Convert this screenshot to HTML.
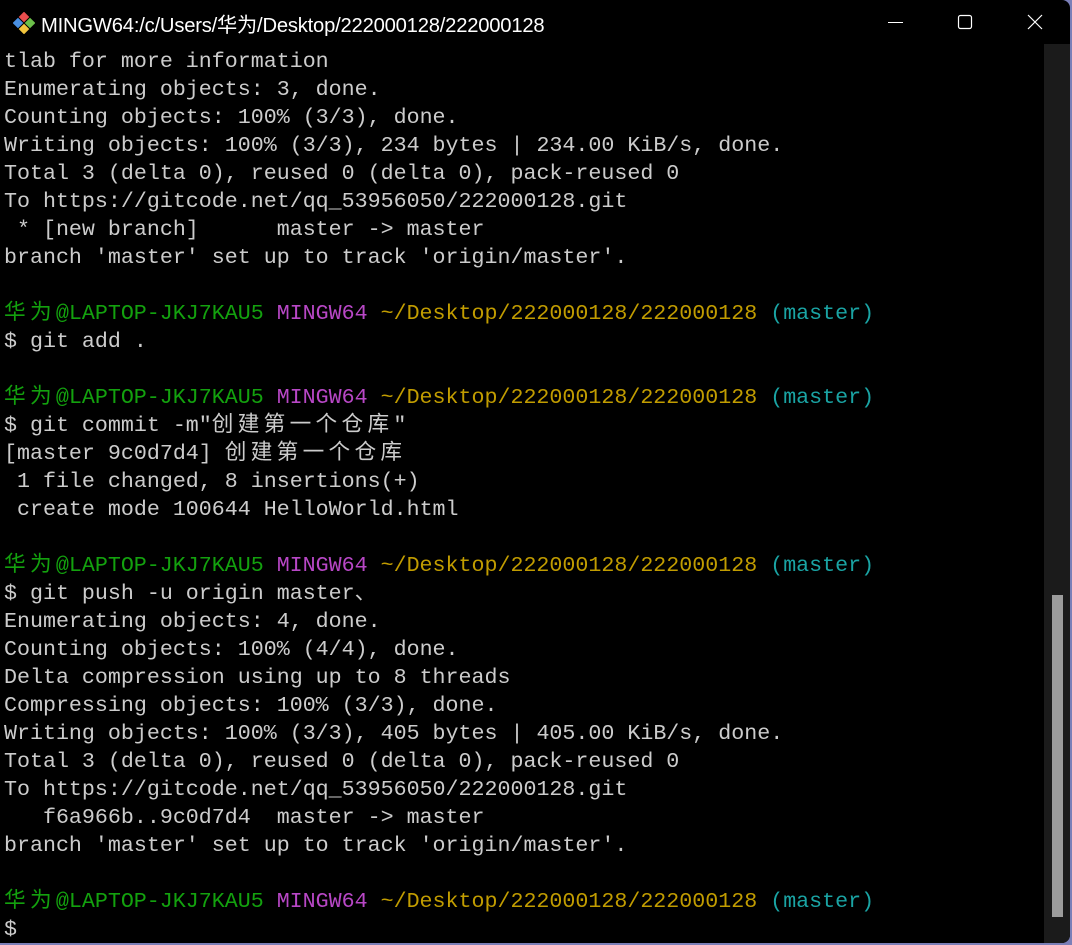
<!DOCTYPE html>
<html><head><meta charset="utf-8"><style>
html,body{margin:0;padding:0;width:1072px;height:945px;overflow:hidden;background:#7b7fb8;}
.win{position:absolute;left:0;top:0;width:1070px;height:943px;background:#000;border-radius:0 8px 8px 0;overflow:hidden;}
.title{position:absolute;left:0;top:0;width:100%;height:44px;color:#fff;font-family:"Liberation Sans","Noto Sans CJK SC",sans-serif;font-size:20.2px;}
.title .t{position:absolute;left:41px;top:9px;letter-spacing:-0.2px;}
.sb{position:absolute;left:1044px;top:44px;width:26px;height:899px;background:#1b1b1b;}
.thumb{position:absolute;left:8px;top:551px;width:11px;height:322px;background:#9c9c9c;}
pre{position:absolute;left:4px;top:48px;margin:0;font-family:"Liberation Mono",monospace;font-size:21.65px;line-height:28px;color:#cccccc;}
.c{font-family:"Noto Sans CJK SC",sans-serif;letter-spacing:4.3px;line-height:0;}
.g{color:#13a10e}.m{color:#b847c6}.y{color:#c19c00}.cy{color:#1aa4a4}
</style></head><body>
<div class="win">
<div class="title">
<svg style="position:absolute;left:13px;top:12px" width="22" height="22" viewBox="0 0 22 22">
<g transform="rotate(45 11 11)"><rect x="3" y="3" width="7.5" height="7.5" fill="#e94e4e"/><rect x="11.5" y="3" width="7.5" height="7.5" fill="#6cc04a"/><rect x="3" y="11.5" width="7.5" height="7.5" fill="#4a90e2"/><rect x="11.5" y="11.5" width="7.5" height="7.5" fill="#f2c53d"/></g></svg>
<span class="t">MINGW64:/c/Users/华为/Desktop/222000128/222000128</span>
<svg style="position:absolute;left:880px;top:14px" width="180" height="18" viewBox="0 0 180 18">
<line x1="8" y1="8.5" x2="23" y2="8.5" stroke="#fff" stroke-width="1"/>
<rect x="78.5" y="1.5" width="13" height="13" rx="2" fill="none" stroke="#fff" stroke-width="1.2"/>
<path d="M148 1 L162 15 M162 1 L148 15" stroke="#fff" stroke-width="1.2"/>
</svg>
</div>
<div class="sb"><div class="thumb"></div></div>
<pre>tlab for more information
Enumerating objects: 3, done.
Counting objects: 100% (3/3), done.
Writing objects: 100% (3/3), 234 bytes | 234.00 KiB/s, done.
Total 3 (delta 0), reused 0 (delta 0), pack-reused 0
To https://gitcode.net/qq_53956050/222000128.git
 * [new branch]      master -> master
branch 'master' set up to track 'origin/master'.

<span class="g"><span class="c">华为</span>@LAPTOP-JKJ7KAU5</span> <span class="m">MINGW64</span> <span class="y">~/Desktop/222000128/222000128</span> <span class="cy">(master)</span>
$ git add .

<span class="g"><span class="c">华为</span>@LAPTOP-JKJ7KAU5</span> <span class="m">MINGW64</span> <span class="y">~/Desktop/222000128/222000128</span> <span class="cy">(master)</span>
$ git commit -m"<span class="c">创建第一个仓库</span>"
[master 9c0d7d4] <span class="c">创建第一个仓库</span>
 1 file changed, 8 insertions(+)
 create mode 100644 HelloWorld.html

<span class="g"><span class="c">华为</span>@LAPTOP-JKJ7KAU5</span> <span class="m">MINGW64</span> <span class="y">~/Desktop/222000128/222000128</span> <span class="cy">(master)</span>
$ git push -u origin master<span class="c">、</span>
Enumerating objects: 4, done.
Counting objects: 100% (4/4), done.
Delta compression using up to 8 threads
Compressing objects: 100% (3/3), done.
Writing objects: 100% (3/3), 405 bytes | 405.00 KiB/s, done.
Total 3 (delta 0), reused 0 (delta 0), pack-reused 0
To https://gitcode.net/qq_53956050/222000128.git
   f6a966b..9c0d7d4  master -> master
branch 'master' set up to track 'origin/master'.

<span class="g"><span class="c">华为</span>@LAPTOP-JKJ7KAU5</span> <span class="m">MINGW64</span> <span class="y">~/Desktop/222000128/222000128</span> <span class="cy">(master)</span>
$</pre>
</div>
</body></html>
